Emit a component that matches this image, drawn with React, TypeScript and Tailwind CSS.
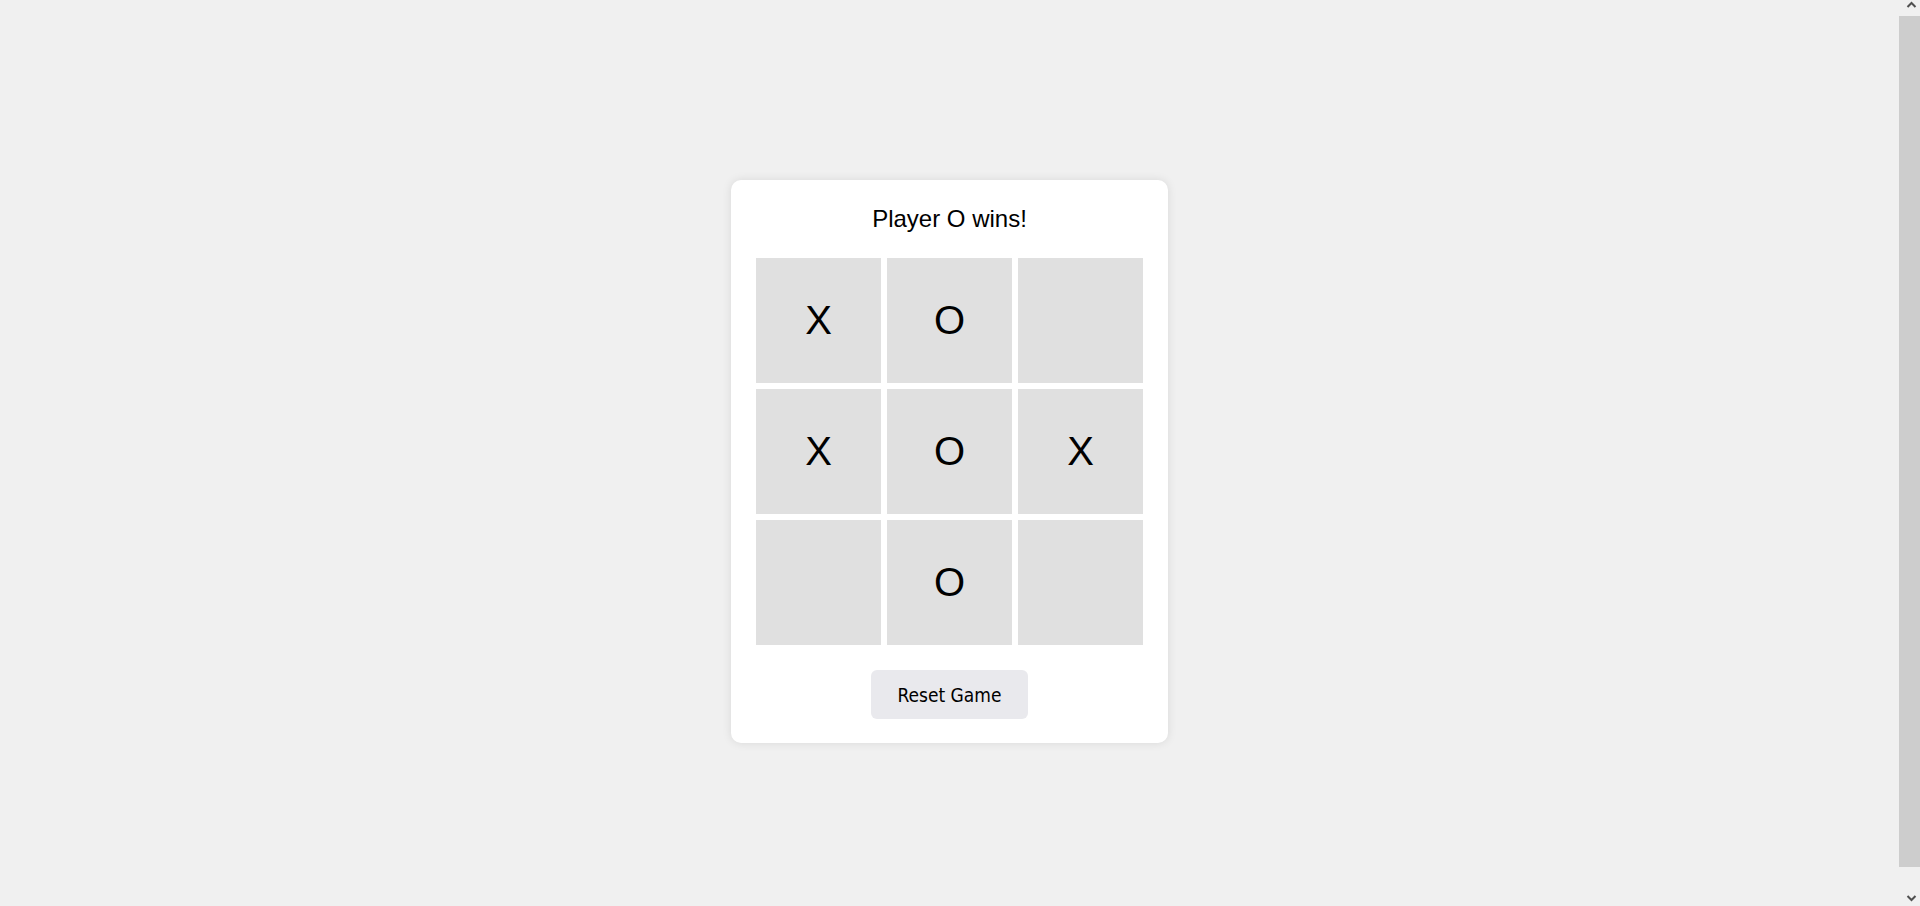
import React, { useState } from 'react';

type Cell = 'X' | 'O' | null;

const LINES = [
  [0, 1, 2], [3, 4, 5], [6, 7, 8],
  [0, 3, 6], [1, 4, 7], [2, 5, 8],
  [0, 4, 8], [2, 4, 6],
];

const START: Cell[] = ['X', 'O', null, 'X', 'O', 'X', null, 'O', null];

function getWinner(board: Cell[]): Cell {
  for (const [a, b, c] of LINES) {
    if (board[a] && board[a] === board[b] && board[a] === board[c]) return board[a];
  }
  return null;
}

// page scrollbar as drawn by the browser in the reference
const ScrollBar: React.FC = () => (
  <div className="fixed top-0 right-0 w-[21px] h-screen bg-[#f0f0f0] flex flex-col items-end">
    <svg className="self-center ml-[4px] mt-[1px]" width="11" height="8" viewBox="0 0 11 8">
      <path d="M1.5 6 L5.5 2 L9.5 6" fill="none" stroke="#505050" strokeWidth="2" />
    </svg>
    <div className="mt-[7px] w-[21px] h-[851px] bg-[#cdcdcd]" />
    <svg className="self-center ml-[4px] mt-[27px]" width="11" height="8" viewBox="0 0 11 8">
      <path d="M1.5 2 L5.5 6 L9.5 2" fill="none" stroke="#505050" strokeWidth="2" />
    </svg>
  </div>
);

const App: React.FC = () => {
  const [board, setBoard] = useState<Cell[]>(START);
  const [turn, setTurn] = useState<'X' | 'O'>('X');

  const winner = getWinner(board);
  const full = board.every((c) => c !== null);
  const status = winner
    ? `Player ${winner} wins!`
    : full
      ? "It's a draw!"
      : `Player ${turn}'s turn`;

  const play = (i: number) => {
    if (board[i] || winner) return;
    const next = board.slice();
    next[i] = turn;
    setBoard(next);
    setTurn(turn === 'X' ? 'O' : 'X');
  };

  const reset = () => {
    setBoard(Array(9).fill(null));
    setTurn('X');
  };

  return (
    <div className="bg-[#f0f0f0] pr-[21px] font-['Liberation_Sans',Arial,sans-serif] text-black">
      <div className="p-2">
        <div className="h-screen flex items-center justify-center">
          <div className="w-[437px] bg-white rounded-[10px] shadow-[0_0_10px_rgba(0,0,0,0.1)] pt-[25px] pb-[24px] px-[25px] flex flex-col items-center">
            <h2 className="text-[24px] leading-[28px] mb-[25px]">{status}</h2>

            <div className="grid grid-cols-[repeat(3,125px)] grid-rows-[repeat(3,125px)] gap-[6px]">
              {board.map((cell, i) => (
                <button
                  key={i}
                  onClick={() => play(i)}
                  className="bg-[#e0e0e0] flex items-center justify-center text-[40px] leading-none font-['Liberation_Sans',Arial,sans-serif] cursor-pointer"
                >
                  {cell}
                </button>
              ))}
            </div>

            <button
              onClick={reset}
              className="mt-[25px] w-[157px] h-[49px] pt-[3px] rounded-[6px] bg-[#e9e9ed] text-[19px] font-['DejaVu_Sans_Condensed','DejaVu_Sans',sans-serif] [font-stretch:condensed] cursor-pointer"
            >
              Reset Game
            </button>
          </div>
        </div>
      </div>
      <ScrollBar />
    </div>
  );
};

export default App;
